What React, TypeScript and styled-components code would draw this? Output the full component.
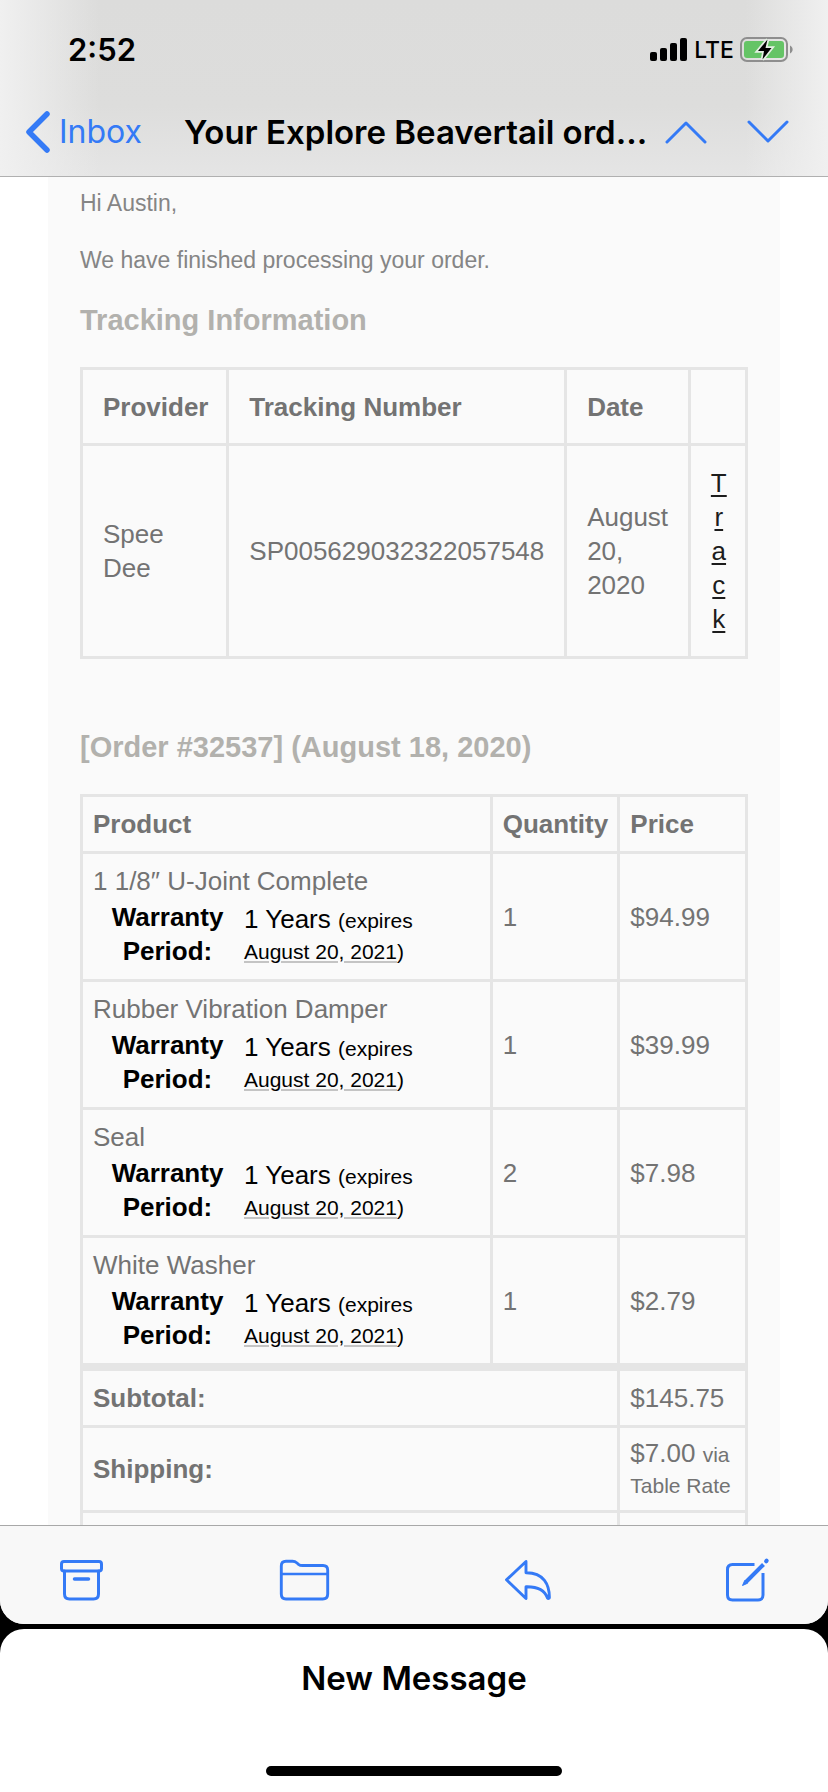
import React from "react";
import styled, { createGlobalStyle } from "styled-components";

const ui = `Inter, "Liberation Sans", sans-serif`;
const mail = `"Liberation Sans", Arial, sans-serif`;
const blue = "#347af6";
const line = "#e5e5e5";

const GlobalStyle = createGlobalStyle`
  *, *::before, *::after { box-sizing: border-box; }
  html, body { margin: 0; background: #000; }
  button { border: 0; padding: 0; background: none; color: inherit; font: inherit; }
  svg { display: block; }
`;

const Screen = styled.div`
  height: 100vh;
  display: flex;
  flex-direction: column;
  gap: 5px;
  background: #000;
`;

const MailView = styled.main`
  flex: 1;
  min-height: 0;
  display: flex;
  flex-direction: column;
  overflow: hidden;
  border-radius: 0 0 24px 24px;
  background: #fff;
`;

const TopBar = styled.header`
  flex: none;
  border-bottom: 1px solid #b0b0b0;
  background:
    linear-gradient(to right, #f0f0f0 0, #f0f0f000 12%, #f0f0f000 90%, #f0f0f0 100%),
    linear-gradient(to bottom, #dcdcdb 0, #dddddc 60%, #e5e5e5 100%);
  font-family: ${ui};
`;

const StatusBar = styled.div`
  height: 88px;
  padding: 12px 34px 0 68px;
  display: flex;
  align-items: center;
  justify-content: space-between;
`;

const Clock = styled.time`
  font-size: 31px;
  font-weight: 600;
  line-height: 40px;
`;

const Indicators = styled.div`
  display: flex;
  align-items: center;
  gap: 6px;
`;

const Network = styled.span`
  font-size: 23px;
  font-weight: 500;
  line-height: 32px;
`;

const NavBar = styled.nav`
  height: 88px;
  padding: 0 39px 0 25px;
  display: flex;
  align-items: center;
`;

const BackLink = styled.a`
  display: flex;
  align-items: center;
  gap: 8px;
  color: ${blue};
  font-size: 32px;
  line-height: 40px;
  text-decoration: none;
`;

const Subject = styled.h1`
  flex: 1;
  margin: 0 12px 0 42px;
  font-size: 33px;
  font-weight: 600;
  line-height: 40px;
  white-space: nowrap;
`;

const Arrows = styled.div`
  display: flex;
  gap: 40px;
  color: ${blue};
`;

const Reader = styled.section`
  flex: 1;
  min-height: 0;
  overflow: hidden;
  padding: 0 48px;
`;

const Letter = styled.article`
  padding: 10px 32px;
  background: #fafafa;
  color: #737373;
  font-family: ${mail};
  font-size: 26px;
  line-height: 34px;
`;

const Paragraph = styled.p`
  margin: 0 0 24px;
  color: #858585;
  font-size: 23px;
  line-height: 33px;
`;

const Heading = styled.h2<{ $spaced?: boolean }>`
  margin: ${(p) => (p.$spaced ? "69px" : "0")} 0 28px;
  color: #b2b1ad;
  font-size: 29px;
  font-weight: 700;
  line-height: 38px;
`;

const Grid = styled.table`
  width: 100%;
  table-layout: fixed;
  border: 3px solid ${line};
  border-collapse: collapse;
`;

const Col = styled.col<{ $share?: string }>`
  width: ${(p) => p.$share ?? "auto"};
`;

const TrackHead = styled.th`
  padding: 20px 20px 19px;
  border: 3px solid ${line};
  text-align: left;
`;

const TrackCell = styled.td`
  padding: 20px;
  border: 3px solid ${line};
`;

const TrackLink = styled.a`
  display: block;
  width: 16px;
  color: #1c1c1c;
  text-align: center;
  text-underline-offset: 3px;
  word-break: break-all;
`;

const OrderHead = styled.th`
  padding: 10px;
  border: 3px solid ${line};
  text-align: left;
`;

const OrderCell = styled.td<{ $tight?: boolean }>`
  padding: 10px;
  border: 3px solid ${line};
  line-height: ${(p) => (p.$tight ? "31px" : "34px")};
`;

const Totals = styled.tfoot`
  border-top: 8px solid ${line};
`;

const Warranty = styled.dl`
  margin: 2px 0 1px 18px;
  display: grid;
  grid-template-columns: 113px 1fr;
  column-gap: 20px;
  color: #000;
`;

const Term = styled.dt`
  font-weight: 700;
  text-align: center;
`;

const Detail = styled.dd`
  margin: 0;
  padding: 4px 40px 0 0;
  line-height: 31px;
`;

const Small = styled.small`
  font-size: 21px;
  line-height: 28px;
`;

const DateLink = styled.a`
  color: inherit;
  text-decoration: underline #c4c4c4 2px;
  text-underline-offset: 2px;
`;

const ToolBar = styled.footer`
  flex: none;
  height: 99px;
  padding: 10px 57px 0;
  display: flex;
  align-items: center;
  justify-content: space-between;
  border-top: 1px solid #a8a8a8;
  background: #f8f8f8;
  color: ${blue};
`;

const DraftSheet = styled.button`
  flex: none;
  height: 163px;
  padding: 29px 0 16px;
  display: flex;
  flex-direction: column;
  align-items: center;
  justify-content: space-between;
  border-radius: 24px 24px 0 0;
  background: #fff;
  color: #000;
`;

const DraftTitle = styled.span`
  font-family: ${ui};
  font-size: 33px;
  font-weight: 600;
  line-height: 40px;
`;

const HomeBar = styled.span`
  width: 296px;
  height: 10px;
  border-radius: 5px;
  background: #000;
`;

const stroke = {
  fill: "none",
  stroke: "currentColor",
  strokeLinecap: "round" as const,
  strokeLinejoin: "round" as const,
};

const Signal = () => (
  <svg width="38" height="24" viewBox="0 0 38 24" aria-hidden="true">
    <rect x="0" y="14" width="7" height="9" rx="2" />
    <rect x="10" y="10" width="7" height="13" rx="2" />
    <rect x="20" y="5" width="7" height="18" rx="2" />
    <rect x="30" y="0" width="7" height="23" rx="2" />
  </svg>
);

const Battery = () => (
  <svg width="54" height="26" viewBox="0 0 54 26" aria-hidden="true">
    <rect x="1" y="1" width="46" height="23" rx="6" fill="none" stroke="#8e8e8e" strokeWidth="2" />
    <path d="M50 8.500c3.500 1.500 3.500 6.500 0 8z" fill="#8e8e8e" />
    <rect x="4" y="4" width="40" height="17" rx="3" fill="#65c466" />
    <path
      d="M27.500 2.500 18 14h6L22.500 22.500 31.500 11h-6z"
      fill="#000"
      stroke="#e4efe3"
      strokeWidth="3.500"
      paintOrder="stroke"
    />
  </svg>
);

const ArchiveIcon = () => (
  <svg width="48" height="44" viewBox="0 0 48 44" aria-hidden="true">
    <g {...stroke} strokeWidth="3">
      <rect x="4.500" y="3.500" width="40" height="9.500" rx="2.500" />
      <path d="M7.500 13V36q0 5 5 5H36.500q5 0 5-5V13" />
      <path d="M17.500 21H31.500" strokeWidth="3.500" />
    </g>
  </svg>
);

const FolderIcon = () => (
  <svg width="52" height="44" viewBox="0 0 52 44" aria-hidden="true">
    <g {...stroke} strokeWidth="2.900">
      <path d="M3.300 36V8q0-4.700 4.700-4.700h6.500q2.500 0 4.500 1.700l1.500 1.300q1.500 1.200 4 1.200H45q4.700 0 4.700 4.700V36q0 5-5 5H8q-4.700 0-4.700-5z" />
      <path d="M3.300 16H49.700" strokeWidth="2.500" />
    </g>
  </svg>
);

const ReplyIcon = () => (
  <svg width="48" height="44" viewBox="0 0 48 44" aria-hidden="true">
    <path
      {...stroke}
      strokeWidth="2.900"
      d="M22 3.500 2.500 21.800 22 40.500V28.700C31 28.500 40 30 43.500 40c.7.800 1.900.5 1.900-.6C45.400 27 40 14.500 22 14.700z"
    />
  </svg>
);

const ComposeIcon = () => (
  <svg width="46" height="46" viewBox="0 0 46 46" aria-hidden="true">
    <g {...stroke} strokeWidth="3">
      <path d="M29.500 7.500H7.500q-5 0-5 5V38q0 5 5 5H33q5 0 5-5V16" strokeLinecap="butt" />
      <path d="M20.500 25.500 38.500 7.500" strokeWidth="4" strokeLinecap="butt" />
      <path d="M19.500 24 17.500 28.500 22 26.500z" strokeWidth="1" fill="currentColor" />
      <path d="M41.200 4.200 41.600 3.800" strokeWidth="4.200" />
    </g>
  </svg>
);

const items = [
  { name: "1 1/8″ U-Joint Complete", quantity: 1, price: "$94.99" },
  { name: "Rubber Vibration Damper", quantity: 1, price: "$39.99" },
  { name: "Seal", quantity: 2, price: "$7.98" },
  { name: "White Washer", quantity: 1, price: "$2.79" },
];

const TrackingTable = () => (
  <Grid>
    <colgroup>
      <Col $share="22%" />
      <Col />
      <Col $share="18.6%" />
      <Col $share="8.600%" />
    </colgroup>
    <thead>
      <tr>
        <TrackHead>Provider</TrackHead>
        <TrackHead>Tracking Number</TrackHead>
        <TrackHead>Date</TrackHead>
        <TrackHead />
      </tr>
    </thead>
    <tbody>
      <tr>
        <TrackCell>Spee Dee</TrackCell>
        <TrackCell>SP005629032322057548</TrackCell>
        <TrackCell>August 20, 2020</TrackCell>
        <TrackCell>
          <TrackLink href="#track">Track</TrackLink>
        </TrackCell>
      </tr>
    </tbody>
  </Grid>
);

const OrderTable = () => (
  <Grid>
    <colgroup>
      <Col />
      <Col $share="19.200%" />
      <Col $share="19.200%" />
    </colgroup>
    <thead>
      <tr>
        <OrderHead>Product</OrderHead>
        <OrderHead>Quantity</OrderHead>
        <OrderHead>Price</OrderHead>
      </tr>
    </thead>
    <tbody>
      {items.map((item) => (
        <tr key={item.name}>
          <OrderCell>
            {item.name}
            <Warranty>
              <Term>Warranty Period:</Term>
              <Detail>
                1 Years{" "}
                <Small>
                  (expires <DateLink href="#date">August 20, 2021</DateLink>)
                </Small>
              </Detail>
            </Warranty>
          </OrderCell>
          <OrderCell>{item.quantity}</OrderCell>
          <OrderCell>{item.price}</OrderCell>
        </tr>
      ))}
    </tbody>
    <Totals>
      <tr>
        <OrderHead colSpan={2}>Subtotal:</OrderHead>
        <OrderCell>$145.75</OrderCell>
      </tr>
      <tr>
        <OrderHead colSpan={2}>Shipping:</OrderHead>
        <OrderCell $tight>
          $7.00 <Small>via Table Rate</Small>
        </OrderCell>
      </tr>
      <tr>
        <OrderHead colSpan={2} />
        <OrderCell />
      </tr>
    </Totals>
  </Grid>
);

export default function App() {
  return (
    <Screen>
      <GlobalStyle />
      <MailView>
        <TopBar>
          <StatusBar>
            <Clock>2:52</Clock>
            <Indicators>
              <Signal />
              <Network>LTE</Network>
              <Battery />
            </Indicators>
          </StatusBar>
          <NavBar>
            <BackLink href="#inbox">
              <svg width="26" height="44" viewBox="0 0 26 44" aria-hidden="true">
                <path {...stroke} strokeWidth="5.500" d="M22 4 4 22 22 40" />
              </svg>
              Inbox
            </BackLink>
            <Subject>Your Explore Beavertail ord...</Subject>
            <Arrows>
              <button aria-label="Previous message">
                <svg width="42" height="24" viewBox="0 0 42 24" aria-hidden="true">
                  <path {...stroke} strokeWidth="3" d="M2 22 21 3 40 22" />
                </svg>
              </button>
              <button aria-label="Next message">
                <svg width="42" height="24" viewBox="0 0 42 24" aria-hidden="true">
                  <path {...stroke} strokeWidth="3" d="M2 2 21 21 40 2" />
                </svg>
              </button>
            </Arrows>
          </NavBar>
        </TopBar>
        <Reader>
          <Letter>
            <Paragraph>Hi Austin,</Paragraph>
            <Paragraph>We have finished processing your order.</Paragraph>
            <Heading>Tracking Information</Heading>
            <TrackingTable />
            <Heading $spaced>[Order #32537] (August 18, 2020)</Heading>
            <OrderTable />
          </Letter>
        </Reader>
        <ToolBar>
          <button aria-label="Archive">
            <ArchiveIcon />
          </button>
          <button aria-label="Move to folder">
            <FolderIcon />
          </button>
          <button aria-label="Reply">
            <ReplyIcon />
          </button>
          <button aria-label="Compose">
            <ComposeIcon />
          </button>
        </ToolBar>
      </MailView>
      <DraftSheet>
        <DraftTitle>New Message</DraftTitle>
        <HomeBar />
      </DraftSheet>
    </Screen>
  );
}
